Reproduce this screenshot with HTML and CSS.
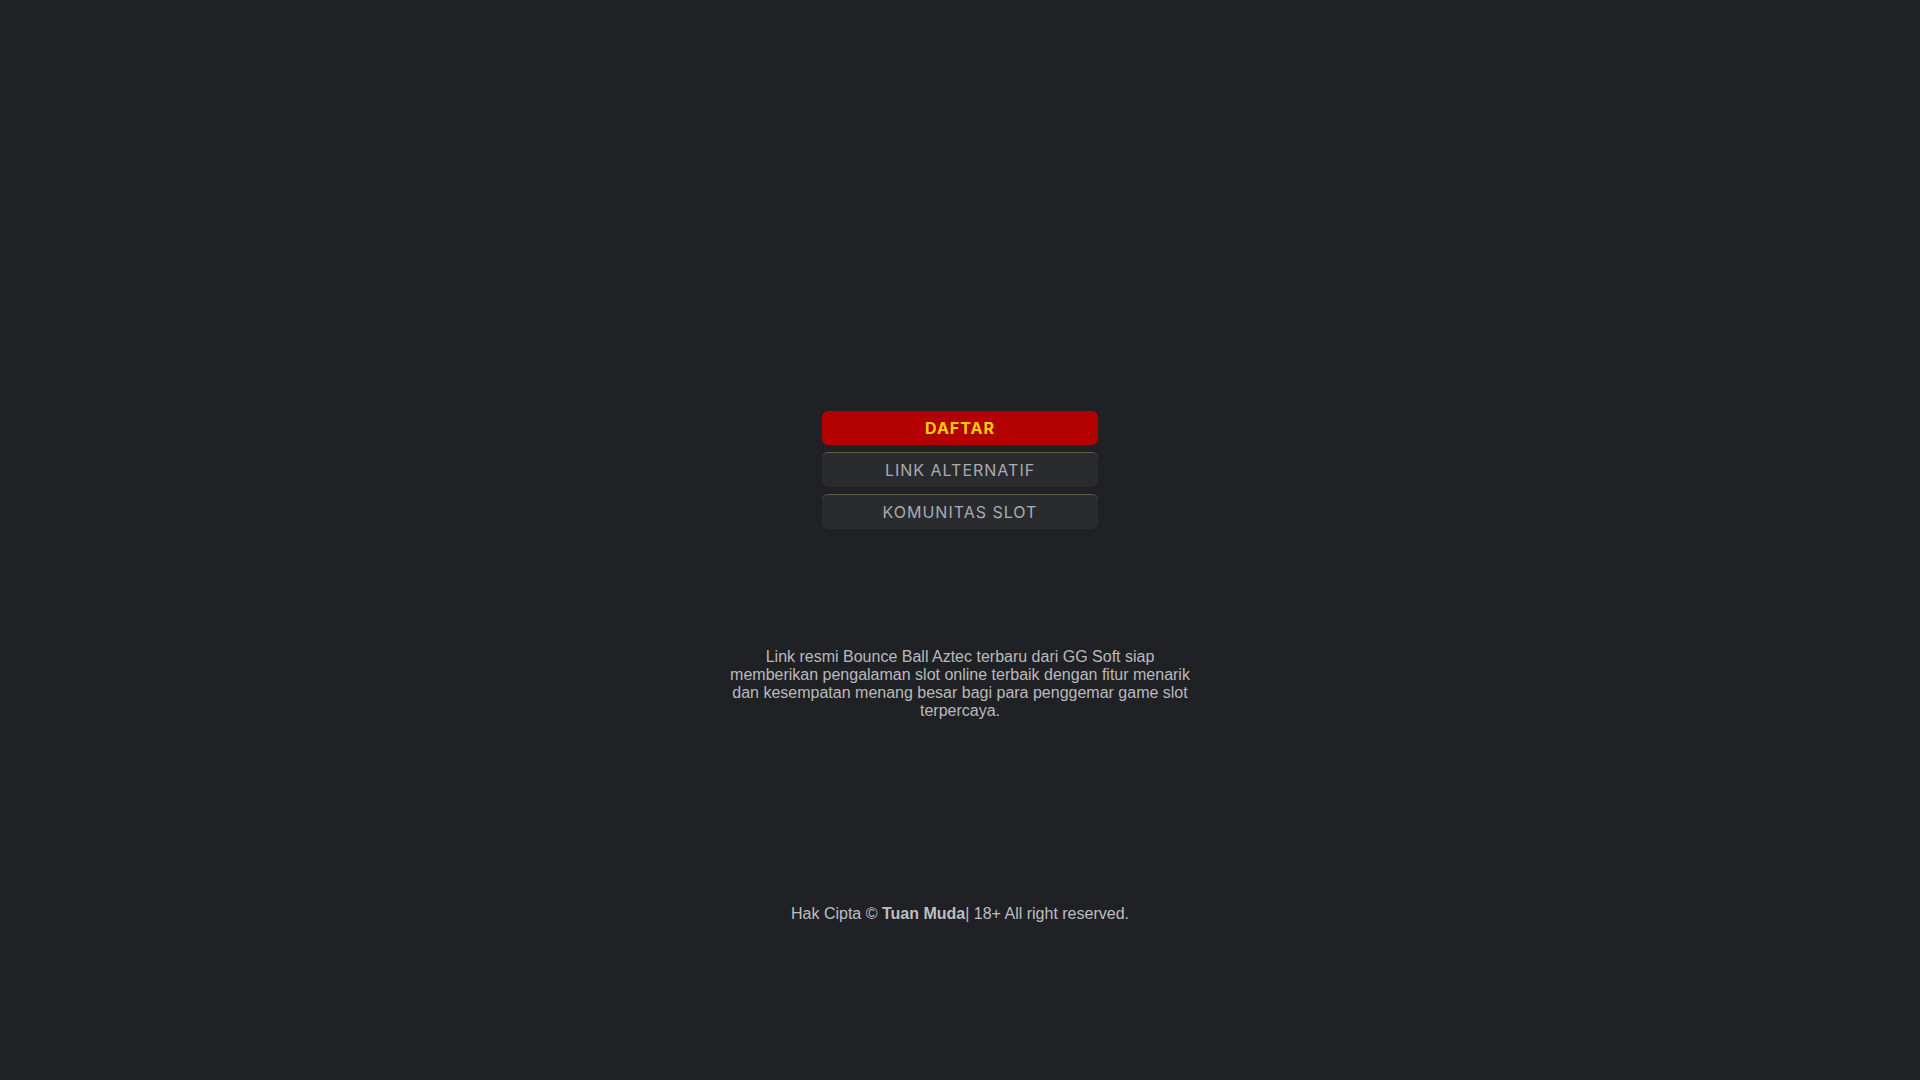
FILE: index.html
```html
<!DOCTYPE html>
<html lang="id">
<head>
<meta charset="utf-8">
<title>Bounce Ball Aztec</title>
<link rel="stylesheet" href="styles.css">
</head>
<body>
<div class="page">
  <nav class="buttons">
    <a class="btn btn-primary" href="#">DAFTAR</a>
    <a class="btn btn-dark" href="#">LINK ALTERNATIF</a>
    <a class="btn btn-dark" href="#">KOMUNITAS SLOT</a>
  </nav>
  <p class="desc">Link resmi Bounce Ball Aztec terbaru dari GG Soft siap memberikan pengalaman slot online terbaik dengan fitur menarik dan kesempatan menang besar bagi para penggemar game slot terpercaya.</p>
  <footer class="footer">Hak Cipta © <strong>Tuan Muda</strong>| 18+ All right reserved.</footer>
</div>
</body>
</html>
```

FILE: styles.css
```css
html, body {
  margin: 0;
  padding: 0;
  background: #202125;
  height: 100%;
}
body {
  font-family: "Liberation Sans", Arial, sans-serif;
}
.page {
  display: flex;
  flex-direction: column;
  align-items: center;
  padding-top: 411px;
}
.buttons {
  width: 276px;
  display: flex;
  flex-direction: column;
  gap: 7px;
}
.btn {
  display: flex;
  align-items: center;
  justify-content: center;
  height: 35px;
  box-sizing: border-box;
  border-radius: 6px;
  text-decoration: none;
  font-family: Inter, "Liberation Sans", sans-serif;
  font-size: 16px;
  letter-spacing: 1px;
}
.btn-primary {
  height: 34px;
  background: #b30000;
  color: #ffcc00;
  font-weight: 700;
}
.btn-dark {
  background: #2a2b2e;
  color: #a8abb2;
  border-top: 1px solid #6b5a45;
}
.desc {
  width: 460px;
  margin: 119px 0 0;
  text-align: center;
  font-size: 16px;
  line-height: 18px;
  color: #b9babd;
}
.footer {
  margin-top: 185px;
  font-size: 16px;
  line-height: 18px;
  color: #bdbec1;
}
.footer strong {
  font-weight: 700;
}
```
